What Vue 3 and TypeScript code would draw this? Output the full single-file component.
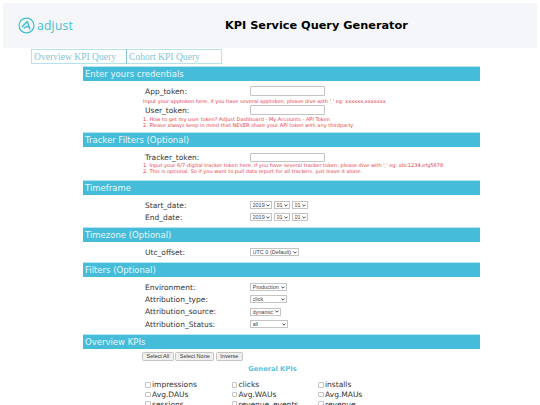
<script setup lang="ts">
const tabs: string[] = ['Overview KPI Query', 'Cohort KPI Query']
const dateRows: string[] = ['Start_date:', 'End_date:']
const filterRows: { label: string; value: string; cls: string }[] = [
  { label: 'Environment:', value: 'Production', cls: 'w37' },
  { label: 'Attribution_type:', value: 'click', cls: 'w37' },
  { label: 'Attribution_source:', value: 'dynamic', cls: 'w31' },
  { label: 'Attribution_Status:', value: 'all', cls: 'w38' },
]
const kpis: string[] = ['impressions', 'clicks', 'installs', 'Avg.DAUs', 'Avg.WAUs', 'Avg.MAUs', 'sessions', 'revenue_events', 'revenue']
</script>

<template>
  <div class="page">
    <header class="head">
      <div class="logo">
        <svg width="17" height="17" viewBox="0 0 18 18" fill="none" stroke="#3fc0d2">
          <circle cx="9" cy="9" r="7.9" stroke-width="1.3" />
          <path d="M4.4 10.4 9.8 4.8 12.6 12.8M6.6 11.8c1.6-2 4-2 5.6-.8" stroke-width="1.5" stroke-linecap="round" stroke-linejoin="round" />
        </svg>
        <span class="brand">adjust</span>
      </div>
      <h1>KPI Service Query Generator</h1>
    </header>

    <nav class="tabs">
      <a v-for="t in tabs" :key="t" class="tab">{{ t }}</a>
    </nav>

    <main class="main">
      <h2 class="bar">Enter yours credentials</h2>
      <div class="body b1">
        <div class="row"><label>App_token:</label><input class="txt" type="text" /></div>
        <p class="hint single">Input your apptoken here, if you have several apptoken, please dive with ',' eg: xxxxxx,xxxxxxx</p>
        <div class="row"><label>User_token:</label><input class="txt" type="text" /></div>
        <p class="hint">1. How to get my user token? Adjust Dashboard - My Accounts - API Token<br />2. Please always keep in mind that NEVER share your API token with any thirdparty</p>
      </div>

      <h2 class="bar">Tracker Filters (Optional)</h2>
      <div class="body b2">
        <div class="row"><label>Tracker_token:</label><input class="txt" type="text" /></div>
        <p class="hint">1. Input your 6/7-digital tracker token here, if you have several tracker token, please dive with ',' eg: abc1234,efg5678<br />2. This is optional. So if you want to pull data report for all trackers, just leave it alone.</p>
      </div>

      <h2 class="bar">Timeframe</h2>
      <div class="body b3">
        <div v-for="d in dateRows" :key="d" class="row tall">
          <label>{{ d }}</label>
          <div class="sels">
            <select class="w22"><option>2019</option></select>
            <select class="w16"><option>01</option></select>
            <select class="w16"><option>01</option></select>
          </div>
        </div>
      </div>

      <h2 class="bar">Timezone (Optional)</h2>
      <div class="body b4">
        <div class="row tall"><label>Utc_offset:</label><select class="w49"><option>UTC 0 (Default)</option></select></div>
      </div>

      <h2 class="bar">Filters (Optional)</h2>
      <div class="body b5">
        <div v-for="f in filterRows" :key="f.label" class="row tall">
          <label>{{ f.label }}</label>
          <select :class="f.cls"><option>{{ f.value }}</option></select>
        </div>
      </div>

      <h2 class="bar">Overview KPIs</h2>
      <div class="body b6">
        <div class="btns">
          <button type="button">Select All</button>
          <button type="button">Select None</button>
          <button type="button">Inverse</button>
        </div>
        <h3 class="sub">General KPIs</h3>
        <div class="kpis">
          <label v-for="k in kpis" :key="k" class="kpi"><input type="checkbox" /><span>{{ k }}</span></label>
        </div>
      </div>
    </main>
  </div>
</template>

<style scoped>
.page {
  width: 540px;
  height: 405px;
  overflow: hidden;
  background: #fff;
  padding-top: 3px;
  box-sizing: border-box;
  font-family: "DejaVu Sans", sans-serif;
}
.head {
  height: 45px;
  margin: 0 3px;
  background: #f4f6fa;
  display: flex;
  align-items: center;
}
.logo {
  display: flex;
  align-items: center;
  width: 68px;
  margin-left: 15px;
  gap: 2px;
}
.brand {
  font-family: "Open Sans", sans-serif;
  font-size: 12px;
  letter-spacing: 0.3px;
  color: #3fc0d2;
}
h1 {
  margin: 0 0 0 139px;
  font-size: 11.3px;
  font-weight: 700;
  color: #000;
  white-space: nowrap;
}
.tabs {
  display: flex;
  margin: 1px 0 0 31px;
  height: 15px;
}
.tab {
  width: 96px;
  box-sizing: border-box;
  border: 1px solid #b5e2ec;
  font-family: "Liberation Serif", serif;
  font-size: 9.6px;
  line-height: 14px;
  color: #85c4d6;
  padding-left: 2px;
  white-space: nowrap;
}
.tab + .tab { border-left: 1px solid #85c4d6; margin-left: -1px; }
.main {
  width: 397px;
  margin: 2px 0 0 83px;
}
.bar {
  margin: 0;
  height: 15px;
  box-sizing: border-box;
  border-top: 1px solid #b5e5f0;
  background: #45bcd9;
  color: #eaf8fb;
  font-size: 8.5px;
  font-weight: 400;
  line-height: 14px;
  padding-left: 2px;
}
.body { box-sizing: border-box; }
.b1 { height: 51px; padding-top: 5px; }
.b2 { height: 33px; padding-top: 6px; }
.b3 { height: 32px; padding-top: 4px; }
.b4 { height: 20px; padding-top: 4px; }
.b5 { height: 57px; padding-top: 4px; }
.b6 { height: 60px; padding-top: 3px; }
.row {
  display: flex;
  align-items: center;
  height: 10px;
  padding-left: 62px;
}
.row label {
  width: 105px;
  font-size: 7.5px;
  color: #333;
}
.tall { height: 12.3px; }
.txt {
  width: 75px;
  height: 10px;
  box-sizing: border-box;
  border: 1px solid #c4c4c4;
  border-radius: 1px;
  padding: 0;
  background: #fff;
}
.b2 .row { height: 9px; }
.b2 .txt { height: 9px; }
.hint {
  margin: 0 0 0 60px;
  padding-top: 1px;
  font-size: 5.05px;
  line-height: 6px;
  color: #e6404f;
  white-space: nowrap;
}
.hint.single { padding-top: 1.5px; padding-bottom: 1.5px; }
.b2 .hint { padding-top: 0; }
.sels { display: flex; gap: 2px; }
select {
  appearance: none;
  height: 8px;
  box-sizing: border-box;
  padding: 0 0 0 1.5px;
  border: 1px solid #c4c4c4;
  border-radius: 0;
  background: #fff url("data:image/svg+xml,%3Csvg xmlns='http://www.w3.org/2000/svg' width='4' height='3' viewBox='0 0 4 3'%3E%3Cpath d='M.4.6 2 2.2 3.6.6' fill='none' stroke='%23333' stroke-width='.9'/%3E%3C/svg%3E") no-repeat right 1px center;
  font-family: "Liberation Sans", sans-serif;
  font-size: 5.5px;
  line-height: 6px;
  color: #444;
}
.w22 { width: 22px; }
.w16 { width: 16px; }
.w49 { width: 49px; }
.w37 { width: 37px; }
.w31 { width: 31px; }
.w38 { width: 38px; }
.btns {
  display: flex;
  gap: 1.4px;
  margin-left: 59px;
}
.btns button {
  height: 9px;
  box-sizing: border-box;
  padding: 0 3.6px;
  border: 1px solid #c4c4c4;
  border-radius: 1.5px;
  background: #efefef;
  font-family: "Liberation Sans", sans-serif;
  font-size: 5.5px;
  line-height: 7px;
  color: #333;
  white-space: nowrap;
}
.sub {
  margin: 4px 18px 0 0;
  height: 9px;
  line-height: 9px;
  text-align: center;
  font-size: 6.7px;
  font-weight: 700;
  color: #5cc2da;
}
.kpis {
  display: grid;
  grid-template-columns: repeat(3, 86.5px);
  grid-auto-rows: 9.7px;
  margin: 6px 0 0 62px;
}
.kpi {
  display: flex;
  align-items: center;
  font-size: 7.5px;
  color: #333;
  white-space: nowrap;
}
.kpi input {
  appearance: none;
  width: 5.5px;
  height: 5.5px;
  box-sizing: border-box;
  margin: 0 1.5px 0 0;
  border: 1px solid #c4c4c4;
  border-radius: 1px;
  background: #fff;
}
</style>

<style>
html, body { margin: 0; overflow: hidden; background: #fff; }
</style>
